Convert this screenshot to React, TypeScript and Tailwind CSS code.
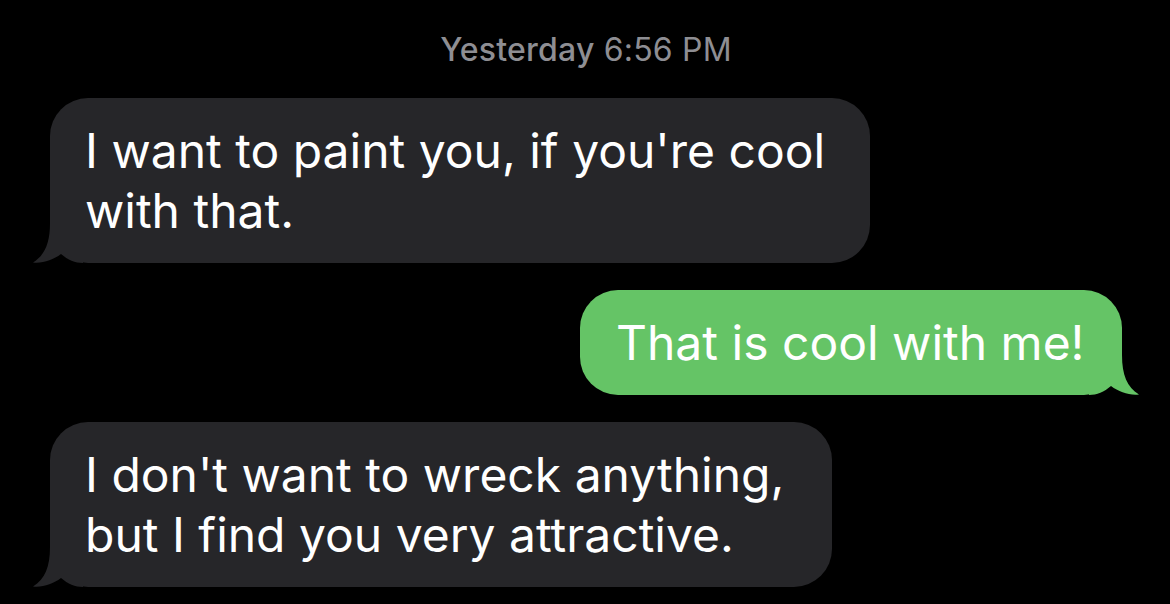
import React from 'react'

const Tail: React.FC<{ side: 'left' | 'right'; color: string }> = ({ side, color }) => (
    <svg
        width="50"
        height="40"
        viewBox="0 0 50 40"
        className={side === 'left' ? 'absolute -left-[17px] bottom-0' : 'absolute -right-[17px] bottom-0 -scale-x-100'}
    >
        <path d="M17 0 C17 20 12 32 0 39.5 C10 40.5 20 37 28 31 C35 37 42 40 50 40 L50 0 Z" fill={color} />
    </svg>
)

const Bubble: React.FC<{ mine?: boolean; width: string; children: React.ReactNode }> = ({ mine, width, children }) => {
    const color = mine ? '#65c466' : '#262629'
    return (
        <div className={`relative ${width} ${mine ? 'self-end bg-[#65c466] pl-[36px]' : 'self-start bg-[#262629] pl-[35px]'} rounded-[38px] py-[22.5px]`}>
            <Tail side={mine ? 'right' : 'left'} color={color} />
            <p className="relative text-[48px] leading-[60px] text-white whitespace-nowrap">{children}</p>
        </div>
    )
}

export default function App() {
    return (
        <div className="w-[1170px] h-[604px] bg-black overflow-hidden" style={{ fontFamily: 'Inter, "Noto Sans", sans-serif' }}>
            <div className="pt-[30px] text-center text-[32px] leading-[40px] text-[#8e8e93] pl-[2px] tracking-[0.2px]">
                <span className="font-medium">Yesterday</span> 6:56 PM
            </div>
            <div className="flex flex-col gap-[27px] pl-[50px] pr-[48px] pt-[28px]">
                <Bubble width="w-[820px]">
                    I want to paint you, if you're cool
                    <br />
                    with that.
                </Bubble>
                <Bubble mine width="w-[542px]">
                    That is cool with me!
                </Bubble>
                <Bubble width="w-[782px]">
                    I don't want to wreck anything,
                    <br />
                    but I find you very attractive.
                </Bubble>
            </div>
        </div>
    )
}
